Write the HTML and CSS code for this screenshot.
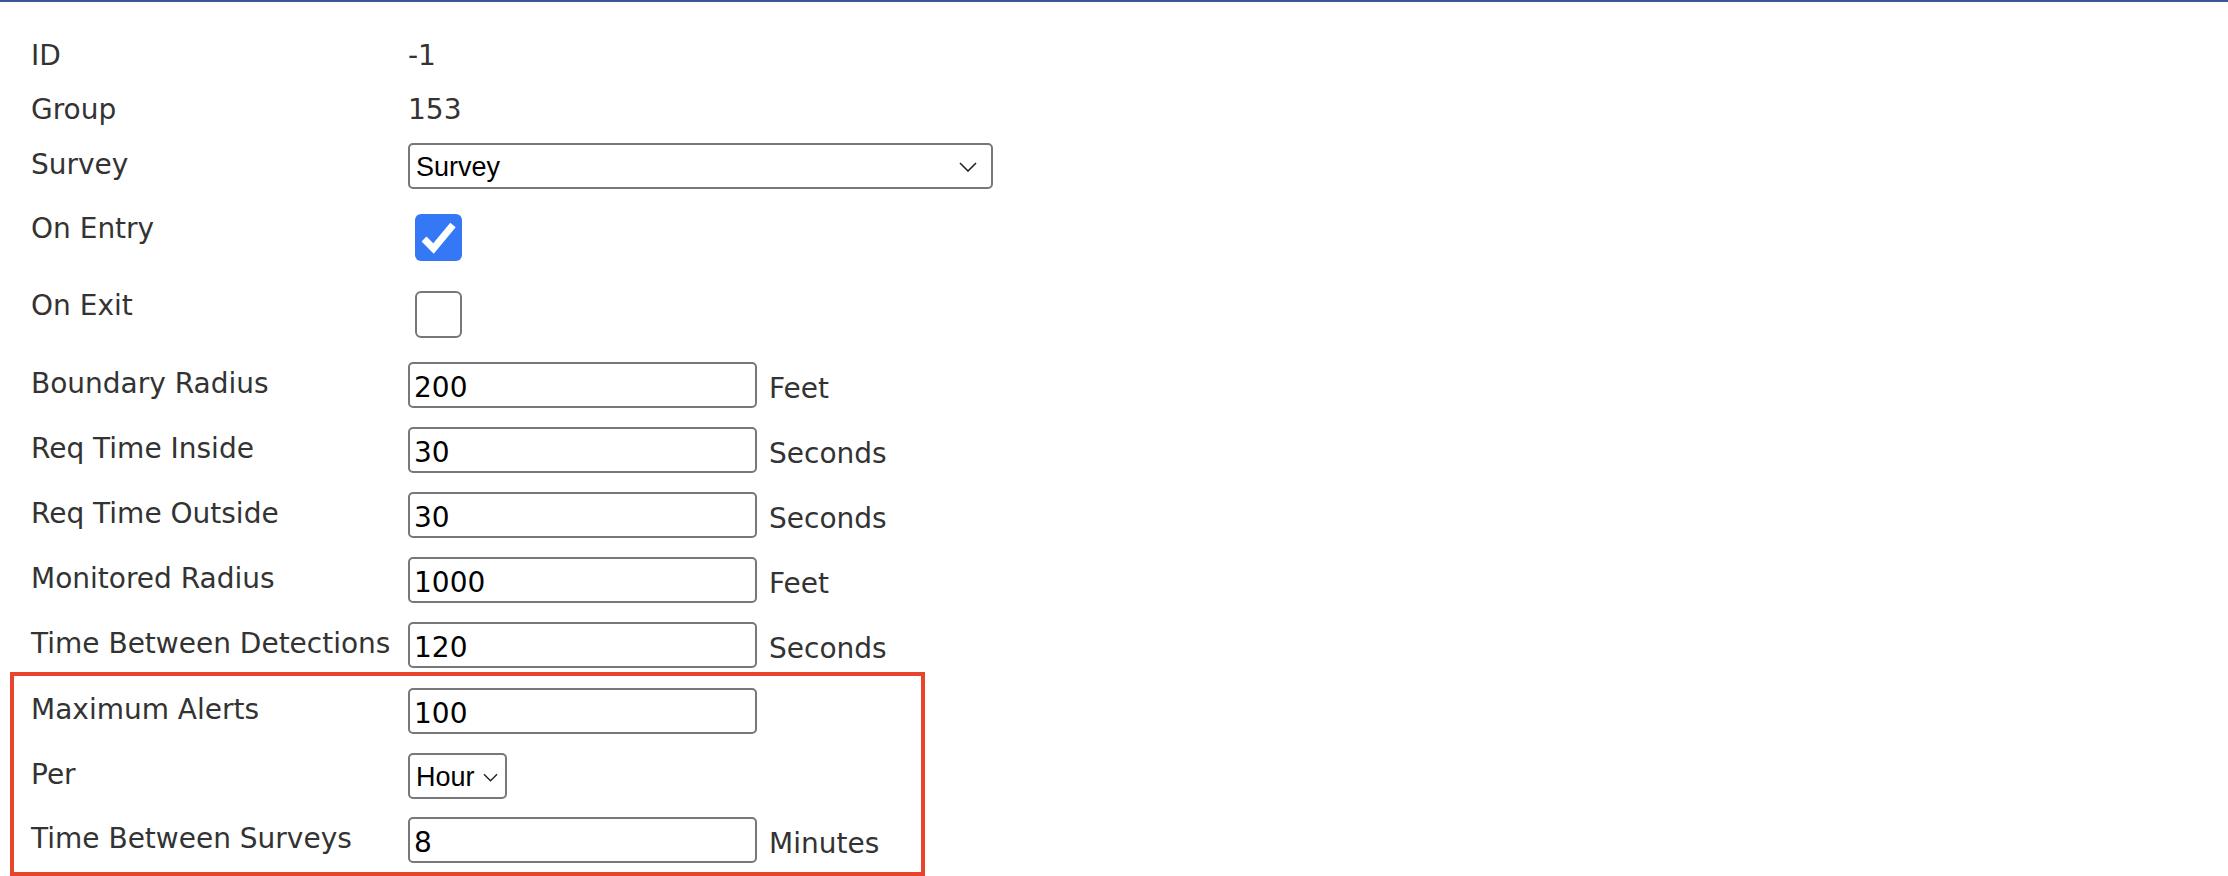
FILE: index.html
```html
<!DOCTYPE html>
<html lang="en">
<head>
<meta charset="utf-8">
<title>Geofence Survey</title>
<link rel="stylesheet" href="styles.css">
</head>
<body>
<div class="page">
  <div class="row row-id">
    <span class="label">ID</span>
    <span class="value">-1</span>
  </div>
  <div class="row row-group">
    <span class="label">Group</span>
    <span class="value">153</span>
  </div>
  <div class="row row-select">
    <span class="label label-ctl">Survey</span>
    <div class="select select-wide">
      <span>Survey</span>
      <svg class="chev" viewBox="0 0 18 10" width="18" height="10"><polyline points="1,1 9,9 17,1" fill="none" stroke="#222" stroke-width="1.6"/></svg>
    </div>
  </div>
  <div class="row row-check">
    <span class="label">On Entry</span>
    <span class="checkbox checked">
      <svg viewBox="0 0 47 47" width="47" height="47"><polyline points="9,25 18.5,34.5 38,11" fill="none" stroke="#fff" stroke-width="7"/></svg>
    </span>
  </div>
  <div class="row row-check row-check2">
    <span class="label">On Exit</span>
    <span class="checkbox"></span>
  </div>
  <div class="row row-input">
    <span class="label label-ctl">Boundary Radius</span>
    <input class="field" type="text" value="200">
    <span class="unit">Feet</span>
  </div>
  <div class="row row-input">
    <span class="label label-ctl">Req Time Inside</span>
    <input class="field" type="text" value="30">
    <span class="unit">Seconds</span>
  </div>
  <div class="row row-input">
    <span class="label label-ctl">Req Time Outside</span>
    <input class="field" type="text" value="30">
    <span class="unit">Seconds</span>
  </div>
  <div class="row row-input">
    <span class="label label-ctl">Monitored Radius</span>
    <input class="field" type="text" value="1000">
    <span class="unit">Feet</span>
  </div>
  <div class="row row-input row-last">
    <span class="label label-ctl">Time Between Detections</span>
    <input class="field" type="text" value="120">
    <span class="unit">Seconds</span>
  </div>
  <div class="highlight">
    <div class="row row-input">
      <span class="label label-ctl">Maximum Alerts</span>
      <input class="field" type="text" value="100">
    </div>
    <div class="row row-input row-per">
      <span class="label label-ctl">Per</span>
      <div class="select select-small">
        <span>Hour</span>
        <svg class="chev" viewBox="0 0 16 9" width="15" height="9"><polyline points="1,1 8,8 15,1" fill="none" stroke="#222" stroke-width="1.5"/></svg>
      </div>
    </div>
    <div class="row row-input row-end">
      <span class="label label-ctl">Time Between Surveys</span>
      <input class="field" type="text" value="8">
      <span class="unit">Minutes</span>
    </div>
  </div>
</div>
</body>
</html>
```
FILE: styles.css
```css
html, body {
  margin: 0;
  padding: 0;
  background: #ffffff;
}

body {
  font-family: "DejaVu Sans", Verdana, sans-serif;
  font-size: 28px;
  color: #333333;
  border-top: 2px solid #3a5894;
}

.page {
  padding: 35px 0 0 31px;
}

.row {
  display: grid;
  grid-template-columns: 377px auto auto;
  justify-content: start;
  align-items: start;
}

.label {
  line-height: 34px;
  padding-top: 2px;
  white-space: nowrap;
}

.label-ctl {
  margin-top: 3px;
}

.value {
  line-height: 34px;
  padding-top: 2px;
}

.row-id { height: 54px; }
.row-group { height: 52px; }
.row-select { height: 67px; }
.row-check { height: 77px; }
.row-check2 { height: 75px; }
.row-input { height: 65px; }
.row-last { height: 50px; }
.row-per { height: 64px; }
.row-end { height: 46px; }

.select {
  box-sizing: border-box;
  height: 46px;
  border: 2px solid #787878;
  border-radius: 5px;
  background: #fff;
  display: flex;
  align-items: center;
  justify-content: space-between;
  font-family: "Liberation Sans", Arial, sans-serif;
  font-size: 27px;
  color: #000;
  padding: 2px 14px 0 6px;
}

.select-wide { width: 585px; }
.select-small { width: 99px; padding-right: 7px; }

.chev { display: block; }

.checkbox {
  box-sizing: border-box;
  width: 47px;
  height: 47px;
  margin: 4px 0 0 7px;
  border: 2px solid #777777;
  border-radius: 6px;
  background: #fff;
  display: block;
}

.checkbox.checked {
  border: none;
  background: #3478f6;
}

.checkbox svg { display: block; }

.field {
  box-sizing: border-box;
  width: 349px;
  height: 46px;
  margin: 0;
  border: 2px solid #787878;
  border-radius: 5px;
  padding: 5px 6px 0 4px;
  font-family: "DejaVu Sans", Verdana, sans-serif;
  font-size: 28px;
  color: #000;
  background: #fff;
  outline: none;
}

.unit {
  margin-left: 12px;
  line-height: 46px;
  padding-top: 4px;
  white-space: nowrap;
}

.highlight {
  box-sizing: border-box;
  width: 915px;
  margin-left: -21px;
  border: 4px solid #e8442c;
  padding: 12px 0 9px 17px;
}
```
